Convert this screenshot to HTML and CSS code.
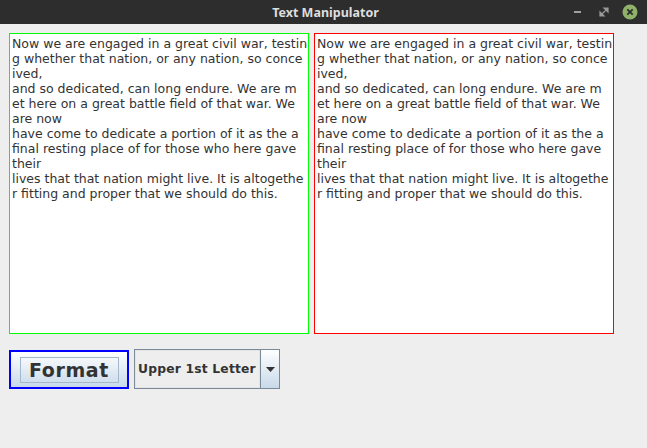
FILE: index.html
```html
<!DOCTYPE html>
<html>
<head>
<meta charset="utf-8">
<link rel="stylesheet" href="styles.css">
</head>
<body>
<div class="window">
  <div class="titlebar">
    <span class="title">Text Manipulator</span>
    <div class="controls">
      <span class="ctl min"></span>
      <svg class="ctl max" width="10" height="10" viewBox="0 0 10 10"><path d="M1 9 L1 5 L5 9 Z M9 1 L9 5 L5 1 Z M3 7 L7 3" fill="#9a9a9a" stroke="#9a9a9a" stroke-width="1.2"/></svg>
      <svg class="ctl close" width="16" height="16" viewBox="0 0 16 16"><circle cx="8" cy="8" r="7.5" fill="#8fb16a"/><path d="M5.3 5.3 L10.7 10.7 M10.7 5.3 L5.3 10.7" stroke="#2b2b2b" stroke-width="1.8"/></svg>
    </div>
  </div>
  <div class="content">
    <div class="areas">
<div class="area green">Now we are engaged in a great civil war, testin
g whether that nation, or any nation, so conce
ived,
and so dedicated, can long endure. We are m
et here on a great battle field of that war. We
are now
have come to dedicate a portion of it as the a
final resting place of for those who here gave
their
lives that that nation might live. It is altogethe
r fitting and proper that we should do this.</div>
<div class="area red">Now we are engaged in a great civil war, testin
g whether that nation, or any nation, so conce
ived,
and so dedicated, can long endure. We are m
et here on a great battle field of that war. We
are now
have come to dedicate a portion of it as the a
final resting place of for those who here gave
their
lives that that nation might live. It is altogethe
r fitting and proper that we should do this.</div>
    </div>
    <div class="controls-row">
      <button class="format"><span class="focus">Format</span></button>
      <div class="combo">
        <span class="combo-text">Upper 1st Letter</span>
        <span class="combo-arrow"><svg width="9" height="5" viewBox="0 0 9 5"><path d="M0 0 L9 0 L4.5 5 Z" fill="#333"/></svg></span>
      </div>
    </div>
  </div>
</div>
</body>
</html>
```
FILE: styles.css
```css
html, body {
  margin: 0;
  padding: 0;
  background: #eeeeee;
}
.window {
  width: 647px;
  height: 448px;
  display: flex;
  flex-direction: column;
}
.titlebar {
  height: 24px;
  background: #2d2d2d;
  display: flex;
  align-items: center;
  justify-content: center;
  position: relative;
}
.title {
  font-family: "Noto Sans", "DejaVu Sans", sans-serif;
  font-weight: bold;
  font-size: 12.5px;
  color: #dedede;
  margin-left: 4px;
}
.controls {
  position: absolute;
  right: 9px;
  top: 4px;
  display: flex;
  align-items: center;
}
.ctl.min {
  display: block;
  width: 7px;
  height: 2px;
  background: #a0a0a0;
  margin-right: 18px;
}
.ctl.max {
  margin-right: 13px;
}
.content {
  padding: 9px 9px 0 9px;
}
.areas {
  display: flex;
  gap: 5px;
}
.frame-green, .frame-red {
  padding: 1px;
}
.area {
  box-sizing: border-box;
  width: 300px;
  height: 301px;
  padding: 2px 2px 0 2px;
  white-space: pre;
  overflow: hidden;
  font-family: "DejaVu Sans", sans-serif;
  font-size: 12.5px;
  line-height: 15px;
  color: #333333;
  background-color: #ffffff;
  border-width: 1px;
  border-style: solid;
}
.green { border-color: rgb(0, 255, 0); box-shadow: 0 0 0 0 #00ff00; }
.red { border-color: rgb(255, 0, 0); }
.controls-row {
  display: flex;
  align-items: flex-start;
  margin-top: 15px;
  gap: 5px;
}
.format {
  box-sizing: border-box;
  width: 120px;
  height: 39px;
  border: 2px solid #0000ff;
  background: linear-gradient(#ffffff, #c8d9ea);
  padding: 0;
  margin: 0;
  margin-top: 1px;
  display: flex;
  align-items: center;
  justify-content: center;
}
.focus {
  display: block;
  box-sizing: border-box;
  width: 99px;
  height: 26px;
  border: 1px solid #a3b8cc;
  font-family: "DejaVu Sans", sans-serif;
  font-weight: bold;
  font-size: 19px;
  line-height: 24px;
  letter-spacing: 0.6px;
  color: #333333;
  text-align: center;
}
.combo {
  box-sizing: border-box;
  width: 146px;
  height: 40px;
  border: 1px solid #7a8a99;
  display: flex;
}
.combo-text {
  flex: 1;
  border: 1px solid #e4e4e4;
  background: #eeeeee;
  font-family: "DejaVu Sans", sans-serif;
  font-weight: bold;
  font-size: 12.3px;
  letter-spacing: 0.2px;
  line-height: 36px;
  color: #333333;
  padding-left: 2px;
  white-space: nowrap;
  overflow: hidden;
}
.combo-arrow {
  width: 18px;
  flex: none;
  border-left: 1px solid #7a8a99;
  background: linear-gradient(#ffffff, #c8d9ea);
  display: flex;
  align-items: center;
  justify-content: center;
}
```
